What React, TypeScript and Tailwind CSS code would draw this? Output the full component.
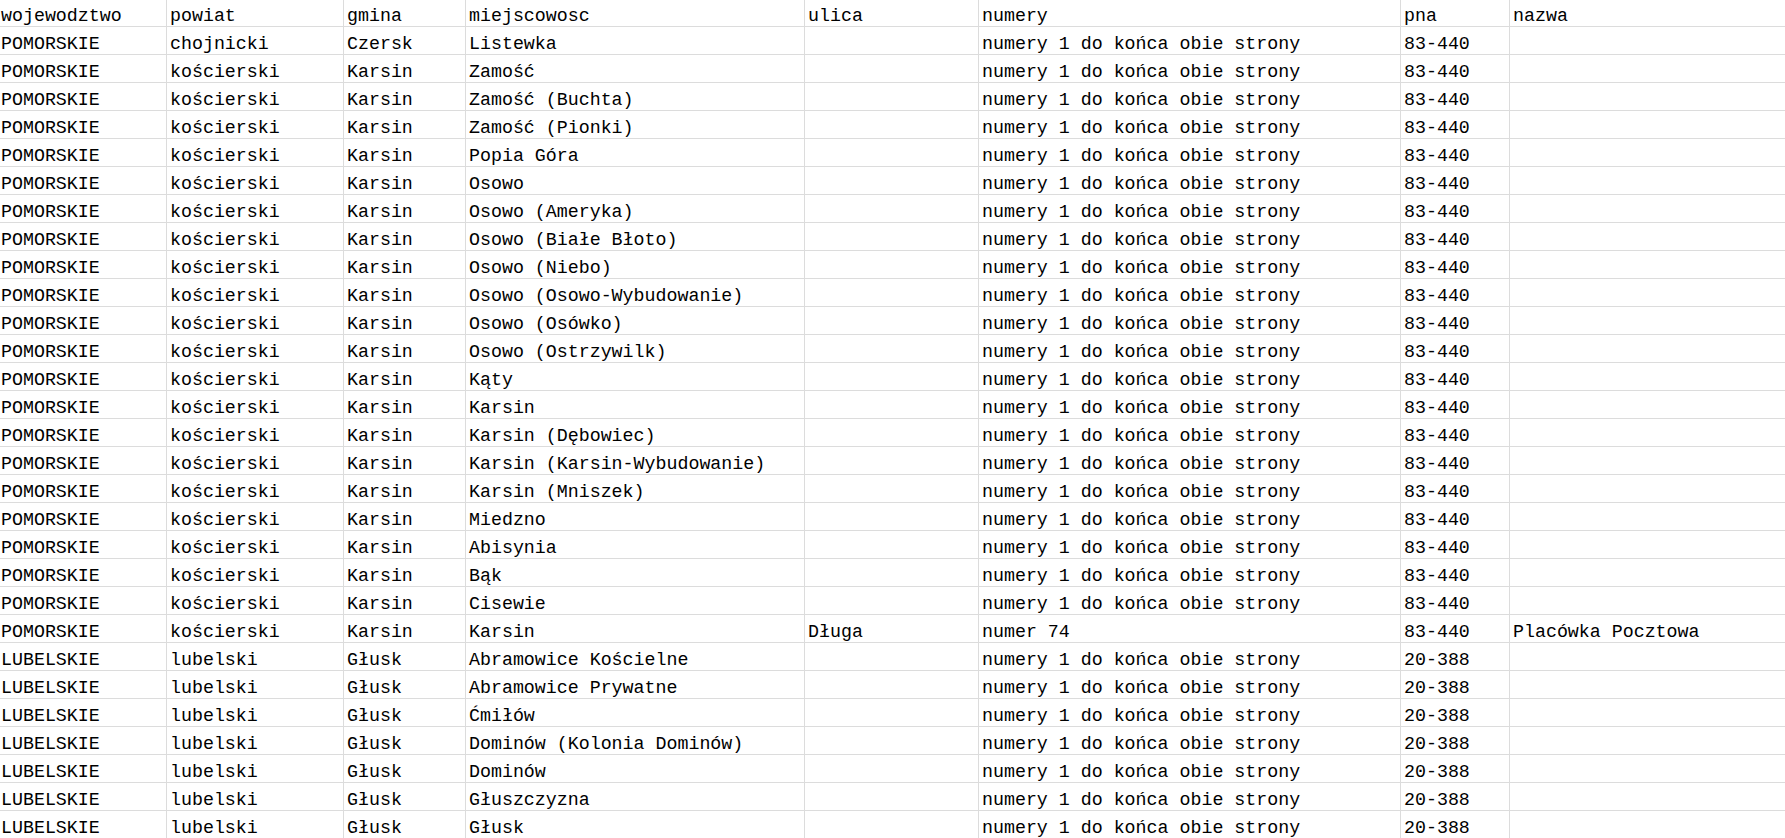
import React from 'react';

const headers = ['wojewodztwo', 'powiat', 'gmina', 'miejscowosc', 'ulica', 'numery', 'pna', 'nazwa'];

const ALL = 'numery 1 do końca obie strony';

const karsinPlaces = [
  'Zamość',
  'Zamość (Buchta)',
  'Zamość (Pionki)',
  'Popia Góra',
  'Osowo',
  'Osowo (Ameryka)',
  'Osowo (Białe Błoto)',
  'Osowo (Niebo)',
  'Osowo (Osowo-Wybudowanie)',
  'Osowo (Osówko)',
  'Osowo (Ostrzywilk)',
  'Kąty',
  'Karsin',
  'Karsin (Dębowiec)',
  'Karsin (Karsin-Wybudowanie)',
  'Karsin (Mniszek)',
  'Miedzno',
  'Abisynia',
  'Bąk',
  'Cisewie',
];

const gluskPlaces = [
  'Abramowice Kościelne',
  'Abramowice Prywatne',
  'Ćmiłów',
  'Dominów (Kolonia Dominów)',
  'Dominów',
  'Głuszczyzna',
  'Głusk',
];

const rows: string[][] = [
  ['POMORSKIE', 'chojnicki', 'Czersk', 'Listewka', '', ALL, '83-440', ''],
  ...karsinPlaces.map((m) => ['POMORSKIE', 'kościerski', 'Karsin', m, '', ALL, '83-440', '']),
  ['POMORSKIE', 'kościerski', 'Karsin', 'Karsin', 'Długa', 'numer 74', '83-440', 'Placówka Pocztowa'],
  ...gluskPlaces.map((m) => ['LUBELSKIE', 'lubelski', 'Głusk', m, '', ALL, '20-388', '']),
];

const Row = ({ cells, header }: { cells: string[]; header?: boolean }) => (
  <div
    className={`grid grid-cols-[167px_177px_122px_339px_174px_422px_109px_1fr] border-b border-[#dcdcdc] ${
      header ? 'h-[27px]' : 'h-[28px]'
    }`}
  >
    {cells.map((c, i) => (
      <div
        key={i}
        className={`flex items-center overflow-hidden whitespace-nowrap pt-[7px] ${
          i === 0 ? 'pl-[1px]' : 'pl-[3px]'
        } ${i < 7 ? 'border-r border-[#dcdcdc]' : ''}`}
      >
        {c}
      </div>
    ))}
  </div>
);

export default function App() {
  return (
    <div
      className="h-screen w-full overflow-hidden bg-white text-[18.3px] leading-none text-black"
      style={{ fontFamily: '"Liberation Mono", "DejaVu Sans Mono", monospace' }}
    >
      <Row cells={headers} header />
      {rows.map((r, i) => (
        <Row key={i} cells={r} />
      ))}
    </div>
  );
}
